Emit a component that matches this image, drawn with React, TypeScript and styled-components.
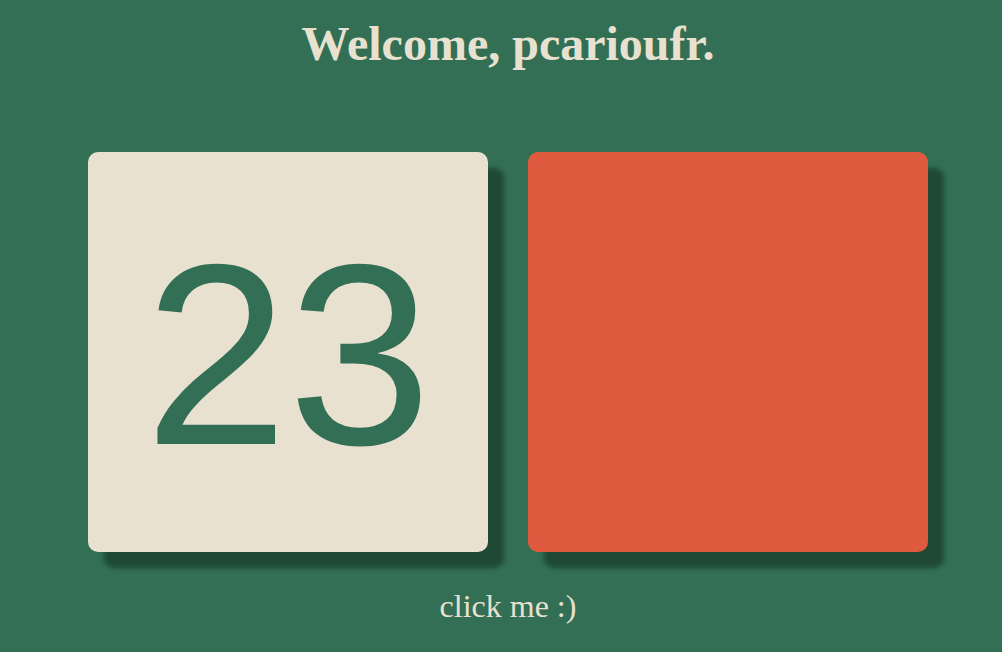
import React from "react";
import styled, { createGlobalStyle } from "styled-components";

const Global = createGlobalStyle`
  html, body { margin: 0; padding: 0; background: #336f55; }
  body { font-family: "Liberation Serif", "Times New Roman", serif; }
`;

const Page = styled.main`
  min-height: 652px;
  box-sizing: border-box;
  padding: 0 0 0 14px;
  display: flex;
  flex-direction: column;
  align-items: center;
  color: #e8e1d0;
`;

const Title = styled.h1`
  margin: 15px 0 0;
  font-family: "Liberation Serif", "Times New Roman", serif;
  font-weight: 700;
  font-size: 48px;
  line-height: 58px;
`;

const Cards = styled.div`
  margin-top: 79px;
  display: flex;
  gap: 40px;
`;

const Card = styled.div<{ $bg: string }>`
  width: 400px;
  height: 400px;
  border-radius: 10px;
  background: ${(p) => p.$bg};
  box-shadow: 16px 16px 5px #1f4935;
  display: flex;
  align-items: center;
  justify-content: center;
`;

const Number = styled.span`
  font-family: "Liberation Sans", Arial, sans-serif;
  font-size: 258px;
  line-height: 1;
  color: #336f55;
  margin-top: 6px;
`;

const Click = styled.button`
  margin-top: 36px;
  background: none;
  border: none;
  padding: 0;
  cursor: pointer;
  color: #e8e1d0;
  font-family: "Liberation Serif", "Times New Roman", serif;
  font-size: 32px;
  line-height: 36px;
`;

export default function App() {
  return (
    <>
      <Global />
      <Page>
        <Title>Welcome, pcarioufr.</Title>
        <Cards>
          <Card $bg="#e8e1d0">
            <Number>23</Number>
          </Card>
          <Card $bg="#e05a3f" />
        </Cards>
        <Click>click me :)</Click>
      </Page>
    </>
  );
}
